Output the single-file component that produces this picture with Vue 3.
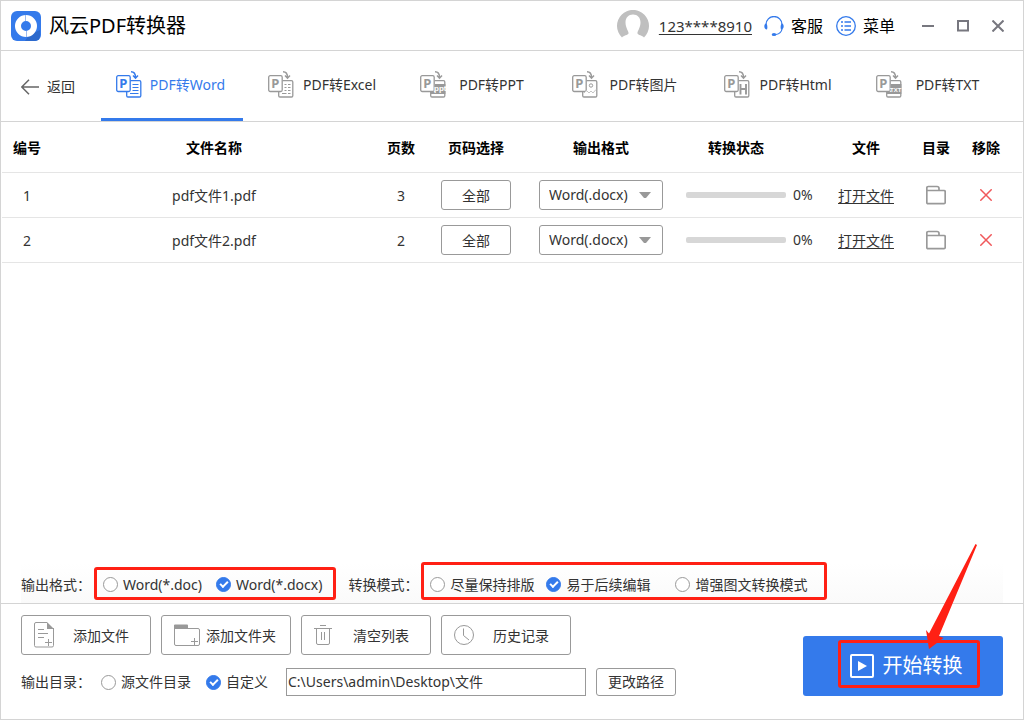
<script setup>
import { ref } from 'vue'

const tabs = [
  { label: 'PDF转Word', kind: 'word' },
  { label: 'PDF转Excel', kind: 'excel' },
  { label: 'PDF转PPT', kind: 'ppt' },
  { label: 'PDF转图片', kind: 'image' },
  { label: 'PDF转Html', kind: 'html' },
  { label: 'PDF转TXT', kind: 'txt' },
]
const active = ref('word')

const files = ref([
  { id: 1, name: 'pdf文件1.pdf', pages: 3, format: 'docx', progress: 0 },
  { id: 2, name: 'pdf文件2.pdf', pages: 2, format: 'docx', progress: 0 },
])
const removeFile = (id) => {
  files.value = files.value.filter((f) => f.id !== id)
}

const outFormat = ref('docx')
const formats = [
  { value: 'doc', label: 'Word(*.doc)' },
  { value: 'docx', label: 'Word(*.docx)' },
]
const mode = ref('edit')
const modes = [
  { value: 'layout', label: '尽量保持排版' },
  { value: 'edit', label: '易于后续编辑' },
  { value: 'enhance', label: '增强图文转换模式' },
]
const target = ref('custom')
const targets = [
  { value: 'source', label: '源文件目录' },
  { value: 'custom', label: '自定义' },
]
const path = ref('C:\\Users\\admin\\Desktop\\文件')
</script>

<template>
  <div class="window">
    <header class="titlebar">
      <svg class="logo" viewBox="0 0 30 30" width="30" height="30" aria-hidden="true">
        <rect width="30" height="30" rx="6" fill="#347aeb" />
        <path d="M18 24 L29 19 V25 a5 5 0 0 1 -5 5 H14Z" fill="#2c69cc" />
        <circle cx="15" cy="15" r="8" fill="none" stroke="#fff" stroke-width="6" />
        <path d="M14.5 4 V10 M15.5 20 V26" stroke="#9dbcf0" stroke-width="1" />
      </svg>
      <h1>风云PDF转换器</h1>
      <div class="account">
        <svg class="avatar" viewBox="0 0 32 28" width="32" height="28" aria-hidden="true">
          <path d="M5 27.500 A16 16 0 1 1 27 27.500 C25.500 25.500 21 25 20.500 23.500 C20 21.500 23.500 18 23.500 12.500 C23.500 7.500 20.500 4.500 16 4.500 C11.500 4.500 8.500 7.500 8.500 12.500 C8.500 18 12 21.500 11.500 23.500 C11 25 6.500 25.500 5 27.500Z" fill="#bfbfbf" />
        </svg>
        <a class="phone" href="#account">123****8910</a>
      </div>
      <button class="tool service" type="button">
        <svg viewBox="0 0 20 20" width="20" height="20" fill="none" stroke="#347aeb" aria-hidden="true">
          <path d="M2 8.500 A8 8 0 0 1 18 8.500" stroke-width="1.300" />
          <path d="M18 13 C17.500 16 15 18 12 18.500" stroke-width="1.200" />
          <path d="M2.500 7.500 C-.5 7.500 -.5 13.500 3 13.500 Q4 10.500 2.500 7.500Z M17.500 7.500 C20.500 7.500 20.500 13.500 17 13.500 Q16 10.500 17.500 7.500Z" fill="#347aeb" stroke="none" />
          <ellipse cx="10" cy="18.500" rx="2.300" ry="1.500" fill="#347aeb" stroke="none" />
        </svg>
        <span>客服</span>
      </button>
      <button class="tool" type="button">
        <svg viewBox="0 0 20 20" width="20" height="20" fill="none" stroke="#347aeb" aria-hidden="true">
          <circle cx="10" cy="10" r="9.300" stroke-width="1.300" />
          <path d="M8.500 6 H15 M8.500 10 H15 M8.500 14 H15 M5 6 H7 M5 10 H7 M5 14 H7" stroke-width="1.600" />
        </svg>
        <span>菜单</span>
      </button>
      <div class="controls">
        <button type="button" aria-label="最小化">
          <svg viewBox="0 0 12 12" width="12" height="12"><path d="M0 6 H12" stroke="#77777f" stroke-width="2" /></svg>
        </button>
        <button type="button" aria-label="最大化">
          <svg viewBox="0 0 12 12" width="12" height="12"><rect x="1" y="1" width="10" height="9.500" fill="none" stroke="#77777f" stroke-width="2" /></svg>
        </button>
        <button type="button" aria-label="关闭">
          <svg viewBox="0 0 12 12" width="12" height="12"><path d="M.5 .5 L11.500 11.500 M11.500 .5 L.5 11.500" stroke="#77777f" stroke-width="2" /></svg>
        </button>
      </div>
    </header>

    <nav class="nav">
      <button class="back" type="button">
        <svg viewBox="0 0 18 16" width="18" height="16" fill="none" stroke="#666" stroke-width="1.500" aria-hidden="true">
          <path d="M8 .8 L.8 8 L8 15.200 M.8 8 H18" />
        </svg>
        <span>返回</span>
      </button>
      <div class="tabs">
        <button
          v-for="t in tabs"
          :key="t.kind"
          type="button"
          class="tab"
          :class="{ active: active === t.kind }"
          @click="active = t.kind"
        >
          <svg viewBox="0 0 26 27" width="26" height="27" fill="none" stroke="currentColor" aria-hidden="true">
            <rect x=".7" y="4.700" width="13.500" height="15.800" rx="1.500" stroke-width="1.300" />
            <text x="3.300" y="17" class="glyph">P</text>
            <path d="M15 .8 C18 .8 19.500 3 19.500 6.500 M17 4.500 L19.500 7.200 L22 4.500" stroke-width="1.400" />
            <path d="M14.500 9.700 H23.500 a1.300 1.300 0 0 1 1.300 1.300 V24.700 a1.300 1.300 0 0 1 -1.300 1.300 H12 a1.300 1.300 0 0 1 -1.300 -1.300 V21" stroke-width="1.300" />
            <path v-if="t.kind === 'word'" d="M16.500 13.500 H22.500 M16.500 16.500 H22.500 M16.500 19.500 H22.500 M14 22.500 H22.500" stroke-width="1.200" />
            <path v-else-if="t.kind === 'excel'" d="M16.500 13.500 H18.500 M20 13.500 H22.500 M16.500 16.500 H18.500 M20 16.500 H22.500 M16.500 19.500 H18.500 M20 19.500 H22.500 M14 22.500 H18.500 M20 22.500 H22.500" stroke-width="1.200" />
            <g v-else-if="t.kind === 'image'">
              <circle cx="19" cy="14.500" r="1.700" />
              <path d="M12 22 L14.500 19.500 L17 22 L19 20 L21 22 L24 18.500" stroke="#c4c4c4" />
            </g>
            <path v-else-if="t.kind === 'html'" d="M16.500 13 V23.500 M22 13 V23.500 M16.500 18 H22" stroke-width="1.900" />
            <g v-else>
              <path d="M15 13 H25.400 V23 H11 V21 H15Z" fill="currentColor" stroke="none" />
              <text v-if="t.kind === 'ppt'" x="14" y="20" class="tag">ppt</text>
              <text v-else x="14" y="21" class="tag small">TXT</text>
            </g>
          </svg>
          <span>{{ t.label }}</span>
        </button>
      </div>
    </nav>

    <main class="list">
      <table>
        <colgroup>
          <col class="c-no" /><col /><col class="c-pages" /><col class="c-range" /><col class="c-format" />
          <col class="c-status" /><col class="c-file" /><col class="c-dir" /><col class="c-remove" />
        </colgroup>
        <thead>
          <tr>
            <th>编号</th>
            <th>文件名称</th>
            <th>页数</th>
            <th>页码选择</th>
            <th>输出格式</th>
            <th class="status-head">转换状态</th>
            <th>文件</th>
            <th>目录</th>
            <th class="last">移除</th>
          </tr>
        </thead>
        <tbody>
          <tr v-for="f in files" :key="f.id">
            <td class="text">{{ f.id }}</td>
            <td class="text">{{ f.name }}</td>
            <td class="text">{{ f.pages }}</td>
            <td><button class="outline range" type="button">全部</button></td>
            <td>
              <div class="select">
                <select v-model="f.format" :aria-label="f.name + ' 输出格式'">
                  <option value="docx">Word(.docx)</option>
                  <option value="doc">Word(.doc)</option>
                </select>
                <svg viewBox="0 0 12 7" width="12" height="7" aria-hidden="true"><path d="M0 0 H12 L7 6 H5Z" fill="#999" /></svg>
              </div>
            </td>
            <td>
              <div class="status">
                <div class="bar"><div class="fill" :style="{ width: f.progress + '%' }"></div></div>
                <span>{{ f.progress }}%</span>
              </div>
            </td>
            <td class="text"><a href="#open">打开文件</a></td>
            <td>
              <button class="icon" type="button" aria-label="打开目录">
                <svg viewBox="0 0 20 20" width="20" height="20" fill="none" stroke="#999" stroke-width="1.700">
                  <path d="M1 5.500 H18 a1.200 1.200 0 0 1 1.200 1.200 V17.500 a1.200 1.200 0 0 1 -1.200 1.200 H2 a1.200 1.200 0 0 1 -1.200 -1.200 V3 a1.500 1.500 0 0 1 1.500 -1.500 H11 a2 2 0 0 1 2 2 V5" />
                </svg>
              </button>
            </td>
            <td class="last">
              <button class="icon" type="button" aria-label="移除" @click="removeFile(f.id)">
                <svg viewBox="0 0 12 12" width="12" height="12"><path d="M.3 .3 L11.700 11.700 M11.700 .3 L.3 11.700" stroke="#f0585b" stroke-width="1.500" /></svg>
              </button>
            </td>
          </tr>
        </tbody>
      </table>
    </main>

    <section class="options">
      <span class="caption">输出格式：</span>
      <div class="group marked formats" role="radiogroup" aria-label="输出格式">
        <label v-for="o in formats" :key="o.value">
          <input v-model="outFormat" type="radio" name="format" :value="o.value" />{{ o.label }}
        </label>
      </div>
      <span class="caption second">转换模式：</span>
      <div class="group marked modes" role="radiogroup" aria-label="转换模式">
        <label v-for="o in modes" :key="o.value">
          <input v-model="mode" type="radio" name="mode" :value="o.value" />{{ o.label }}
        </label>
      </div>
    </section>

    <footer class="footer">
      <div class="left">
        <div class="actions">
          <button class="outline action" type="button">
            <svg viewBox="0 0 26 28" width="26" height="28" fill="none" stroke="#999" aria-hidden="true">
              <path d="M13 1.500 H2 a1.500 1.500 0 0 0 -1.500 1.500 V24.500 a1.500 1.500 0 0 0 1.500 1.500 H18 a1.500 1.500 0 0 0 1.500 -1.500 V7 M4 8.500 H10 M4 12.500 H14 M4 16.500 H10 M11 21.500 H18 M14.500 18 V25" />
              <path d="M13 1 L20 8 H13Z" fill="#999" stroke="none" />
            </svg>
            <span>添加文件</span>
          </button>
          <button class="outline action" type="button">
            <svg viewBox="0 0 26 28" width="26" height="28" fill="none" stroke="#999" aria-hidden="true">
              <path d="M.5 4 V23 a1.500 1.500 0 0 0 1.500 1.500 H24 a1.500 1.500 0 0 0 1.500 -1.500 V9 a1.500 1.500 0 0 0 -1.500 -1.500 H.5 M17 20.500 H24 M20.500 17 V24" />
              <path d="M0 7.500 V4.500 a1 1 0 0 1 1 -1 H13 a1 1 0 0 1 1 1 V7.500Z" fill="#999" stroke="none" />
            </svg>
            <span>添加文件夹</span>
          </button>
          <button class="outline action" type="button">
            <svg viewBox="0 0 26 28" width="26" height="28" fill="none" stroke="#999" aria-hidden="true">
              <path d="M0 7.500 H18 M6 4.500 H12 M2.500 7.500 V22 a1.500 1.500 0 0 0 1.500 1.500 H14 a1.500 1.500 0 0 0 1.500 -1.500 V7.500 M7.500 11 V19 M10.500 11 V19" />
            </svg>
            <span>清空列表</span>
          </button>
          <button class="outline action" type="button">
            <svg viewBox="0 0 26 28" width="26" height="28" fill="none" stroke="#999" aria-hidden="true">
              <circle cx="10" cy="14" r="9.500" />
              <path d="M9.500 7.500 V14.500 L15 19" />
            </svg>
            <span>历史记录</span>
          </button>
        </div>
        <div class="output">
          <span class="caption">输出目录：</span>
          <div class="group" role="radiogroup" aria-label="输出目录">
            <label v-for="o in targets" :key="o.value">
              <input v-model="target" type="radio" name="target" :value="o.value" />{{ o.label }}
            </label>
          </div>
          <input v-model="path" class="path" type="text" aria-label="自定义目录" />
          <button class="outline change" type="button">更改路径</button>
        </div>
      </div>
      <button class="start" type="button">
        <span class="start-label">
          <svg viewBox="0 0 24 24" width="24" height="24" aria-hidden="true">
            <rect x="1" y="1" width="22" height="22" rx="1" fill="none" stroke="#fff" stroke-width="2" />
            <path d="M8 7 L17 12 L8 17Z" fill="#fff" />
          </svg>
          开始转换
        </span>
        <svg class="pointer" viewBox="0 0 60 110" width="60" height="110" aria-hidden="true">
          <path d="M55.500 4 L57 5 L19 96 L23.500 98 L9 109 L6 90 L9 93.500Z" fill="#ff2014" />
        </svg>
      </button>
    </footer>
  </div>
</template>

<style>
body {
  margin: 0;
  background: #fff;
}
</style>

<style scoped>
.window {
  box-sizing: border-box;
  display: flex;
  flex-direction: column;
  min-height: 100vh;
  border: 1px solid #d4d4d4;
  background: #fff;
  color: #333;
  font: 14px/20px "Noto Sans", "Noto Sans CJK SC", sans-serif;
}
button,
input,
select {
  font: inherit;
  color: inherit;
  margin: 0;
}
button {
  padding: 0;
  border: 0;
  background: none;
  cursor: pointer;
}
svg {
  display: block;
  flex: none;
}
a {
  color: inherit;
  text-underline-offset: 2px;
}

.titlebar {
  display: flex;
  align-items: center;
  height: 49px;
  padding: 0 19px 0 10px;
  border-bottom: 1px solid #d4d4d4;
  font-size: 16px;
}
h1 {
  margin: 0 auto 0 8px;
  color: #000;
  font-size: 20px;
  font-weight: 400;
  line-height: 28px;
}
.account {
  display: flex;
  align-items: center;
  gap: 10px;
  margin-right: 12px;
}
.avatar {
  margin-bottom: 3px;
}
.phone {
  font-size: 15px;
}
.tool {
  display: flex;
  align-items: center;
  gap: 7px;
  color: #000;
}
.service {
  margin-right: 13px;
}
.controls {
  display: flex;
  gap: 23px;
  margin-left: 27px;
}

.nav {
  display: flex;
  height: 70px;
  padding-right: 20px;
  border-bottom: 1px solid #d4d4d4;
}
.back {
  display: flex;
  align-items: center;
  gap: 8px;
  width: 80px;
  padding: 2px 0 0 20px;
  box-sizing: content-box;
}
.tabs {
  display: flex;
  flex: 1;
  gap: 10px;
}
.tab {
  display: flex;
  flex: 1;
  align-items: center;
  padding: 0 10px 0 15px;
  border-bottom: 3px solid transparent;
}
.tab span {
  flex: 1;
  text-align: center;
}
.tab svg {
  color: #999;
}
.tab.active {
  border-color: #347aeb;
}
.tab.active,
.tab.active svg {
  color: #347aeb;
}
.glyph {
  font: bold 13px "Noto Sans", sans-serif;
  fill: currentColor;
  stroke: none;
}
.tag {
  font: bold 8px "Liberation Sans", sans-serif;
  fill: #fff;
  stroke: none;
}
.small {
  font-size: 6px;
}

.list {
  flex: 1;
  padding: 0 1px;
}
table {
  width: 100%;
  table-layout: fixed;
  border-collapse: separate;
  border-spacing: 0;
}
.c-no,
.c-pages,
.c-dir {
  width: 50px;
}
.c-range {
  width: 100px;
}
.c-format {
  width: 150px;
}
.c-status {
  width: 145px;
}
.c-file {
  width: 90px;
}
.c-remove {
  width: 61px;
}
th,
td {
  box-sizing: border-box;
  height: 45px;
  padding: 0;
  border-bottom: 1px solid #e5e5e5;
  text-align: center;
  vertical-align: middle;
}
th {
  height: 51px;
  padding-top: 2px;
  color: #000;
  font-weight: 700;
}
.text {
  padding-top: 2px;
}
.status-head {
  padding-right: 25px;
}
.last {
  padding-right: 11px;
}
.outline {
  border: 1px solid #999;
  border-radius: 3px;
  background: #fff;
}
.range {
  display: block;
  width: 70px;
  height: 30px;
  margin: 0 auto;
  padding-top: 2px;
}
.select {
  position: relative;
  width: 124px;
  margin: 0 auto;
}
select {
  display: block;
  width: 100%;
  height: 30px;
  padding: 0 9px;
  border: 1px solid #999;
  border-radius: 3px;
  background: #fff;
  appearance: none;
}
.select svg {
  position: absolute;
  top: 12px;
  right: 12px;
  pointer-events: none;
}
.status {
  display: flex;
  align-items: center;
  gap: 7px;
  padding-left: 10px;
}
.bar {
  width: 100px;
  height: 6px;
  border-radius: 2px;
  background: #d7d7d7;
  overflow: hidden;
}
.fill {
  height: 100%;
  background: #347aeb;
}
.icon {
  display: block;
  margin: 0 auto;
}

.options {
  box-sizing: border-box;
  display: flex;
  align-items: center;
  height: 40px;
  margin: 0 20px;
  padding-top: 3px;
  background: linear-gradient(#fff, #fafafa);
}
.caption {
  white-space: nowrap;
}
.second {
  margin-left: 26px;
}
.group {
  display: flex;
  gap: 12px;
  white-space: nowrap;
}
.group label {
  display: flex;
  align-items: center;
  gap: 5px;
}
.marked {
  position: relative;
  margin-left: 12px;
}
.marked::after {
  content: "";
  position: absolute;
  inset: -8px -14px -5px -9px;
  border: 3px solid #ff2014;
  border-radius: 3px;
  pointer-events: none;
}
.formats {
  gap: 14px;
}
.modes::after {
  inset: -13px -20px -5px -9px;
}
.modes label:last-child {
  margin-left: 13px;
}
input[type="radio"] {
  box-sizing: border-box;
  position: relative;
  flex: none;
  width: 15px;
  height: 15px;
  border: 1px solid #999;
  border-radius: 50%;
  background: #fff;
  appearance: none;
}
input[type="radio"]:checked {
  border-color: #347aeb;
  background: #347aeb;
}
input[type="radio"]:checked::before {
  content: "";
  position: absolute;
  top: 3px;
  left: 3px;
  width: 6px;
  height: 3px;
  border: solid #fff;
  border-width: 0 0 2px 2px;
  transform: rotate(-45deg);
}

.footer {
  display: flex;
  align-items: flex-end;
  justify-content: space-between;
  padding: 11px 20px 23px;
  border-top: 1px solid #d4d4d4;
}
.actions {
  display: flex;
  gap: 10px;
  margin-bottom: 13px;
}
.action {
  display: flex;
  align-items: center;
  width: 130px;
  height: 40px;
  padding: 0 8px 0 12px;
}
.action span {
  flex: 1;
  padding-top: 2px;
}
.output {
  display: flex;
  align-items: center;
}
.output .group {
  gap: 15px;
  margin: 0 18px 0 10px;
}
.path {
  box-sizing: border-box;
  width: 300px;
  height: 28px;
  padding: 0 1px 2px;
  border: 1px solid #999;
  background: #fff;
}
.change {
  width: 80px;
  height: 28px;
  margin-left: 10px;
}
.start {
  position: relative;
  display: flex;
  align-items: center;
  justify-content: center;
  width: 200px;
  height: 60px;
  padding-left: 6px;
  border-radius: 3px;
  background: #347aeb;
  color: #fff;
  font-size: 20px;
}
.start-label {
  position: relative;
  display: flex;
  align-items: center;
  gap: 9px;
}
.start-label::after {
  content: "";
  position: absolute;
  inset: -14px -17px -10px -12px;
  border: 3px solid #ff2014;
  border-radius: 3px;
}
.pointer {
  position: absolute;
  top: -96px;
  left: 117px;
  pointer-events: none;
}
</style>
